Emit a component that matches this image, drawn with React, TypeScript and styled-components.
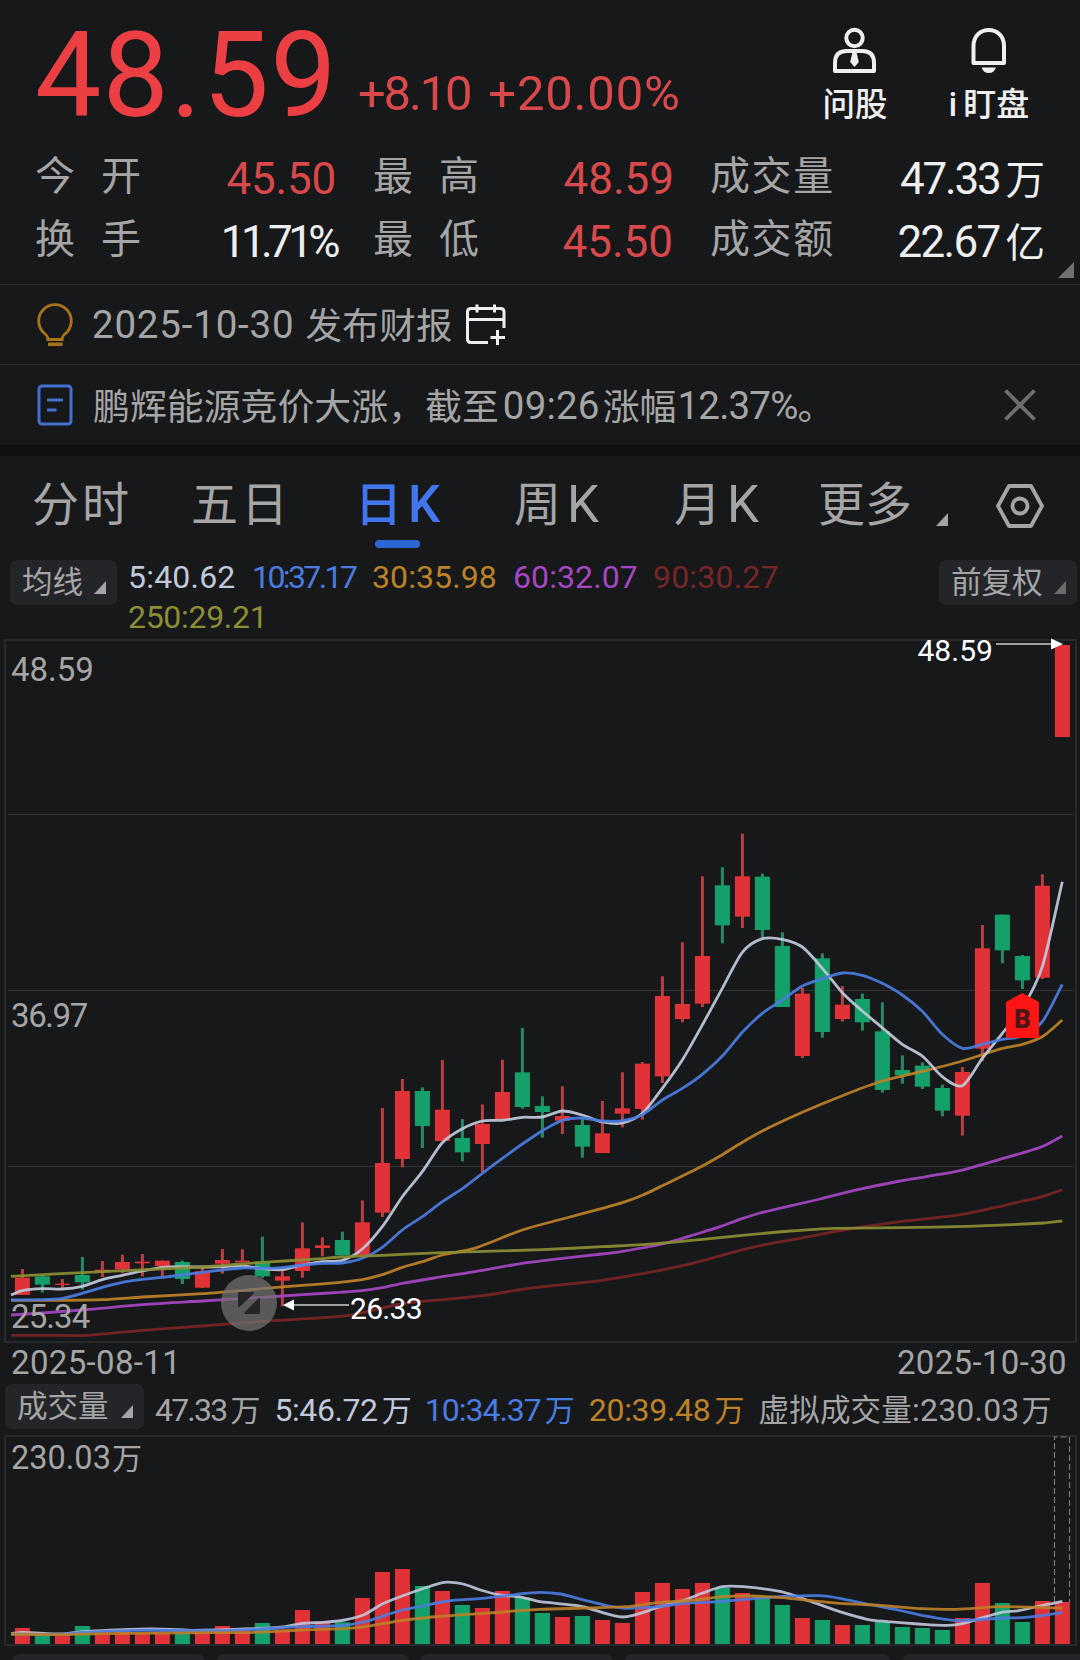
import React from "react";
import styled, { createGlobalStyle } from "styled-components";

const C = {
  bg: "#17181a",
  band: "#0f1012",
  line: "#28292c",
  chip: "#242529",
  grey: "#a5a5a5",
  white: "#efefef",
  red: "#d9494c",
  up: "#e13237",
  down: "#14a06b",
  upWick: "#b93f42",
  downWick: "#278a63",
  blue: "#4176ee",
  ma5: "#c0c8da",
  ma10: "#4a7ce0",
  ma30: "#bd8128",
  ma60: "#a646c4",
  ma90: "#782526",
  ma250: "#8b8e33",
};

const FONT = `Roboto, "Noto Sans CJK SC", sans-serif`;

const Global = createGlobalStyle`
  html, body { margin: 0; background: ${C.bg}; }
  body { width: 1080px; height: 1660px; overflow: hidden; font-family: ${FONT}; }
  * { box-sizing: border-box; }
  svg { display: block; flex: none; overflow: visible; }
`;

const Page = styled.main`
  width: 1080px;
  height: 1660px;
  overflow: hidden;
  display: flex;
  flex-direction: column;
  background: ${C.bg};
  color: ${C.grey};
  white-space: nowrap;
  & > * {
    flex: none;
  }
`;

const Text = styled.span<{ $size: number; $color?: string; $ls?: number; $weight?: number; $ml?: number }>`
  font-size: ${(p) => p.$size}px;
  color: ${(p) => p.$color ?? "inherit"};
  letter-spacing: ${(p) => p.$ls ?? 0}px;
  font-weight: ${(p) => p.$weight ?? 400};
  margin-left: ${(p) => p.$ml ?? 0}px;
`;
const Han = styled(Text)`
  padding-bottom: 3px;
`;

const Header = styled.header`
  height: 148px;
  display: flex;
  padding-left: 35px;
`;
const Price = styled.div`
  font-size: 118px;
  line-height: 152px;
  letter-spacing: 1.3px;
  color: #eb3f43;
  width: 323px;
`;
const Change = styled.div`
  display: flex;
  gap: 18px;
  font-size: 49px;
  line-height: 60px;
  padding-top: 64px;
  color: ${C.red};
  width: 434px;
`;
const Action = styled.button<{ $w: number }>`
  width: ${(p) => p.$w}px;
  border: 0;
  padding: 26px 0 0;
  background: none;
  color: ${C.white};
  font-family: inherit;
  display: flex;
  flex-direction: column;
  align-items: center;
  gap: 9px;
  line-height: 44px;
`;

const Stats = styled.section`
  height: 137px;
  display: grid;
  grid-template-columns: 302px 301px 335px;
  grid-auto-rows: 63px;
  column-gap: 36px;
  padding-left: 35px;
  border-bottom: 1px solid #2d2e30;
  position: relative;
`;
const Stat = styled.div<{ $inset?: number }>`
  display: flex;
  justify-content: space-between;
  line-height: 63px;
  padding-right: ${(p) => p.$inset ?? 0}px;
`;
const StatLabel = styled.span<{ $wide?: boolean }>`
  font-size: 40px;
  letter-spacing: ${(p) => (p.$wide ? 26 : 1.6)}px;
  line-height: 57px;
`;
const Corner = styled.i`
  position: absolute;
  right: 6px;
  bottom: 6px;
  width: 16px;
  height: 16px;
  background: #707072;
  clip-path: polygon(100% 0, 100% 100%, 0 100%);
`;

const Notice = styled.section<{ $last?: boolean }>`
  height: 80px;
  border-bottom: ${(p) => (p.$last ? 0 : 1)}px solid #2d2e30;
  padding: 0 44px 0 37px;
  display: flex;
  align-items: center;
`;
const Inline = styled.span`
  margin-left: 13px;
`;
const Push = styled.span`
  margin-left: auto;
`;
const Band = styled.div`
  height: 11px;
  background: ${C.band};
`;

const Tabs = styled.nav`
  height: 104px;
  display: grid;
  grid-template-columns: 160px 156px 170px 159px 163px 190px 82px;
  align-items: start;
`;
const Tab = styled.div<{ $active?: boolean; $pad: number; $ls?: number }>`
  height: 92px;
  padding-left: ${(p) => p.$pad}px;
  font-size: 47px;
  letter-spacing: ${(p) => p.$ls ?? 0}px;
  line-height: 98px;
  color: ${(p) => (p.$active ? C.blue : C.grey)};
  font-weight: ${(p) => (p.$active ? 500 : 400)};
  display: flex;
  gap: 6px;
  position: relative;
  &::after {
    content: "";
    display: ${(p) => (p.$active ? "block" : "none")};
    position: absolute;
    left: 59px;
    bottom: 0;
    width: 45px;
    height: 8px;
    border-radius: 4px;
    background: #2f66d5;
  }
`;
const Kay = styled.span`
  font-size: 51px;
`;

const Tri = styled.i<{ $color?: string }>`
  width: 12px;
  height: 13px;
  background: ${(p) => p.$color ?? C.grey};
  clip-path: polygon(100% 0, 100% 100%, 0 100%);
  flex: none;
`;
const Chip = styled.div<{ $w: number }>`
  width: ${(p) => p.$w}px;
  height: 45px;
  border-radius: 7px;
  background: ${C.chip};
  padding: 0 11px 0 12px;
  display: flex;
  justify-content: space-between;
  line-height: 45px;
  font-size: 30.5px;
  flex: none;
  ${Tri} {
    margin-top: 21px;
  }
`;

const Legend = styled.section`
  height: 79px;
  padding: 0 3px 0 10px;
  display: flex;
`;
const MaList = styled.div`
  width: 822px;
  padding-left: 11px;
  display: flex;
  flex-wrap: wrap;
  line-height: 40px;
  margin-top: -3px;
  align-content: flex-start;
`;
const MaItem = styled(Text)<{ $w: number }>`
  width: ${(p) => p.$w}px;
`;
const Dates = styled.div`
  display: flex;
  justify-content: space-between;
  height: 40px;
  padding: 0 13px 0 11px;
  line-height: 37px;
  font-size: 33px;
  letter-spacing: 0.35px;
`;
const VolLegend = styled.section`
  height: 52px;
  padding-left: 5px;
  display: flex;
  line-height: 52px;
`;
const Footer = styled.footer`
  padding: 8px 0 0 12px;
  display: grid;
  grid-template-columns: 193px 193px 193px 267px 193px;
  gap: 11px;
  height: 14px;
`;
const FootTab = styled.div`
  height: 40px;
  border-radius: 8px;
  background: ${C.chip};
`;

type Pt = [number, number];
type Candle = [boolean, number, number, number, number];

const X0 = 22.4;
const STEP = 20;
const U = true;
const D = false;

// [rising, body top, body bottom, wick top, wick bottom]
const at = (base: number, rows: Candle[]): Candle[] =>
  rows.map(([c, a, b, t, l]) => [c, base + a / 3, base + b / 3, base + t / 3, base + l / 3]);

const candles: Candle[] = [
  ...at(1050, [
    [U, 683, 735, 657, 735], [D, 679, 704, 675, 728], [U, 701, 705, 687, 713], [D, 675, 697, 621, 719],
    [U, 659, 664, 633, 681], [U, 636, 658, 614, 670], [U, 635, 640, 612, 679], [U, 632, 648, 632, 681],
    [D, 636, 687, 632, 702], [U, 664, 713, 654, 713], [U, 630, 641, 597, 671], [U, 632, 637, 598, 637],
    [D, 635, 679, 560, 684], [U, 679, 692, 660, 769], [U, 595, 663, 517, 683], [U, 586, 594, 562, 619],
    [D, 570, 616, 545, 616], [U, 517, 615, 451, 615],
  ]),
  ...at(970, [
    [U, 579, 728, 414, 741], [U, 363, 567, 327, 592], [D, 363, 468, 352, 534], [U, 419, 513, 270, 513],
    [D, 504, 547, 447, 574], [U, 462, 522, 403, 606], [U, 366, 449, 269, 449], [D, 307, 411, 174, 416],
    [D, 408, 426, 379, 503], [U, 438, 452, 349, 492], [D, 465, 530, 445, 563], [U, 490, 549, 393, 549],
    [U, 415, 431, 307, 472],
  ]),
  ...at(800, [
    [U, 791, 927, 786, 959], [U, 588, 829, 529, 849], [U, 612, 657, 427, 667], [U, 468, 611, 229, 621],
    [D, 256, 376, 202, 430], [U, 229, 350, 101, 384], [D, 230, 390, 221, 412], [D, 438, 621, 397, 621],
    [U, 581, 768, 563, 774], [D, 475, 696, 460, 713], [U, 614, 657, 558, 665], [D, 597, 667, 581, 692],
    [D, 694, 870, 607, 878], [D, 810, 826, 766, 851], [D, 797, 860, 787, 867], [D, 864, 932, 854, 949],
    [U, 816, 947, 801, 1007], [U, 445, 746, 375, 784], [D, 344, 451, 344, 490], [D, 468, 541, 465, 567],
    [U, 257, 533, 223, 537],
  ]),
  [U, 645, 737, 645, 737],
];

const seg = (x0: number, y0: number, sx: number, pts: Pt[]): Pt[] =>
  pts.map(([x, y]) => [x0 + x / sx, y0 + y / 3]);

const A = (pts: Pt[]) => seg(0, 1050, 3, pts);
const B = (pts: Pt[]) => seg(340, 970, 3, pts);
const E = (pts: Pt[]) => seg(620, 800, 3, pts);
const R = (pts: Pt[]) => seg(700, 1130, 3, pts);

const lines: { color: string; pts: Pt[] }[] = [
  {
    color: C.ma90,
    pts: [
      ...A([[33, 856], [150, 856], [260, 856], [427, 841], [607, 828], [787, 814], [1040, 797]]),
      ...B([[187, 1001], [307, 989], [427, 977], [547, 958], [667, 944], [787, 931], [907, 911], [1000, 893]]),
      ...R([[0, 394], [120, 361], [180, 347], [300, 325], [430, 300], [600, 275], [780, 254], [970, 213], [1030, 199], [1087, 179]]),
    ],
  },
  {
    color: C.ma60,
    pts: [
      ...A([[33, 795], [247, 780], [427, 764], [607, 753], [787, 742], [907, 734]]),
      ...B([[0, 967], [67, 962], [127, 953], [187, 940], [307, 920], [427, 901], [547, 880], [667, 865], [787, 852], [847, 844], [967, 822]]),
      ...R([[0, 309], [60, 290], [120, 268], [180, 249], [360, 207], [460, 182], [600, 153], [780, 122], [910, 85], [970, 68], [1030, 48], [1087, 18]]),
    ],
  },
  {
    color: C.ma30,
    pts: [
      ...A([[33, 751], [180, 751], [307, 749], [427, 741], [607, 731], [787, 716], [907, 706]]),
      ...B([[0, 937], [67, 929], [127, 914], [187, 892], [247, 875], [307, 855], [400, 836], [547, 780], [667, 747], [787, 715], [847, 698], [907, 676], [967, 647], [1027, 618]]),
      ...R([[0, 112], [60, 78], [120, 41]]),
      ...E([[427, 993], [547, 937], [667, 887], [787, 843], [907, 814], [1027, 783], [1147, 745], [1207, 733], [1267, 710], [1327, 660]]),
    ],
  },
  {
    color: C.ma5,
    pts: [
      ...A([[33, 735], [67, 722], [127, 716], [187, 717], [247, 709], [307, 689], [367, 676], [427, 663], [487, 652], [547, 650], [607, 651], [667, 650], [727, 648], [787, 656], [847, 659], [907, 645], [967, 635], [1027, 631]]),
      ...B([[67, 837], [127, 770], [187, 680], [247, 605], [307, 518], [367, 476], [427, 453], [487, 451], [547, 442], [607, 441], [667, 423], [727, 435], [787, 456], [847, 459], [907, 430]]),
      ...E([[127, 865], [187, 780], [247, 675], [307, 565], [367, 457], [427, 416], [487, 418], [547, 441], [607, 505], [667, 578], [727, 633], [787, 683], [847, 733], [907, 768], [967, 830], [1027, 857], [1087, 775], [1147, 700], [1207, 625], [1267, 500], [1327, 245]]),
    ],
  },
  {
    color: C.ma10,
    pts: [
      ...A([[33, 750], [127, 749], [187, 745], [247, 730], [307, 712], [367, 697], [427, 688], [487, 682], [547, 675], [607, 667], [667, 660], [727, 654], [787, 655], [847, 653], [907, 645], [967, 640], [1027, 639]]),
      ...B([[67, 865], [127, 832], [187, 780], [247, 740], [307, 695], [367, 656], [427, 610], [487, 565], [547, 522], [607, 482], [667, 451], [727, 444], [787, 453], [847, 452], [907, 434], [967, 390]]),
      ...E([[187, 865], [247, 823], [307, 768], [367, 697], [427, 640], [487, 600], [547, 558], [607, 536], [667, 519], [727, 526], [787, 550], [847, 585], [907, 634], [967, 703], [1027, 745], [1087, 733], [1147, 718], [1207, 708], [1267, 665], [1327, 553]]),
    ],
  },
  {
    color: C.ma250,
    pts: [
      ...A([[33, 679], [307, 665], [607, 651], [787, 637], [967, 626]]),
      ...B([[0, 861], [127, 856], [307, 848], [607, 839], [787, 830], [907, 824]]),
      ...R([[0, 329], [120, 317], [270, 303], [400, 295], [600, 293], [800, 289], [1030, 279], [1087, 273]]),
    ],
  },
];

const F = 1568 / 540;
const G = (pts: Pt[]) => seg(0, 1540, F, pts);
const H = (pts: Pt[]) => seg(540, 1540, F, pts);

const volLines: { color: string; pts: Pt[] }[] = [
  {
    color: C.ma5,
    pts: [
      ...G([[32, 281], [65, 277], [180, 282], [240, 275], [297, 272], [430, 267], [500, 268], [560, 271], [740, 266], [820, 261], [878, 250], [940, 247], [1000, 240], [1055, 225], [1110, 192], [1168, 168], [1225, 147], [1290, 127], [1345, 132], [1395, 150], [1450, 165], [1515, 172]]),
      ...H([[0, 185], [120, 199], [240, 231], [350, 200], [420, 180], [470, 160], [530, 140], [590, 140], [700, 155], [780, 182], [870, 215], [950, 238], [1010, 245], [1100, 252], [1170, 256], [1210, 254], [1260, 241], [1340, 217], [1390, 212], [1450, 198], [1517, 184]]),
    ],
  },
  {
    color: C.ma10,
    pts: [
      ...G([[32, 282], [180, 283], [240, 277], [400, 271], [620, 272], [740, 268], [870, 260], [1000, 256], [1060, 245], [1168, 210], [1225, 198], [1300, 183], [1400, 175], [1500, 163]]),
      ...H([[0, 157], [60, 162], [120, 178], [200, 198], [250, 205], [340, 200], [420, 190], [530, 184], [640, 174], [740, 168], [810, 167], [870, 175], [950, 192], [1040, 210], [1130, 230], [1200, 241], [1260, 240], [1340, 234], [1400, 233], [1460, 226], [1517, 218]]),
    ],
  },
  {
    color: C.ma30,
    pts: [
      ...G([[32, 282], [180, 284], [300, 281], [620, 278], [740, 277], [878, 270], [1000, 266], [1060, 260], [1168, 241], [1290, 228], [1460, 216]]),
      ...H([[0, 208], [250, 200], [340, 188], [450, 180], [530, 170], [620, 168], [700, 173], [870, 190], [990, 196], [1110, 206], [1210, 208], [1340, 200], [1517, 204]]),
    ],
  },
];

const volTops = [
  264, 281, 281, 258, 279, 268, 279, 279, 277, 277, 258, 270, 249, 268, 210, 245, 247, 174, 96, 87, 138, 153, 195, 204,
  153, 172, 219, 231, 228, 240, 249, 156, 129, 147, 129, 144, 159, 171, 195, 234, 240, 255, 255, 246, 261, 264, 270,
  234, 129, 189, 246, 183, 186,
];

function smooth(p: Pt[]): string {
  const n = p.length;
  const slope = (i: number) => {
    const a = p[Math.max(0, i - 1)];
    const b = p[Math.min(n - 1, i + 1)];
    return (b[1] - a[1]) / (b[0] - a[0]);
  };
  let d = `M${p[0][0].toFixed(1)} ${p[0][1].toFixed(1)}`;
  for (let i = 0; i < n - 1; i++) {
    const [x1, y1] = p[i];
    const [x2, y2] = p[i + 1];
    const h = (x2 - x1) / 3.6;
    d += `C${(x1 + h).toFixed(1)} ${(y1 + h * slope(i)).toFixed(1)} ${(x2 - h).toFixed(1)} ${(y2 - h * slope(i + 1)).toFixed(1)} ${x2.toFixed(1)} ${y2.toFixed(1)}`;
  }
  return d;
}

const ChartText = styled.text`
  font-family: ${FONT};
`;

function PriceChart() {
  return (
    <svg width="1080" height="705" viewBox="0 639 1080 705">
      <rect x="5" y="640" width="1071" height="702" fill="none" stroke={C.line} strokeWidth="2" />
      {[814.5, 990.5, 1166.5].map((y) => (
        <path key={y} d={`M8 ${y}H1073`} stroke="#313234" strokeWidth="1" />
      ))}
      {candles.map(([up, a, b, t, l], i) => {
        const x = X0 + i * STEP;
        return (
          <g key={i}>
            <rect x={x - 1.5} y={t} width="3" height={l - t} fill={up ? C.upWick : C.downWick} />
            <rect x={x - 7.5} y={a} width="15" height={b - a} fill={up ? C.up : C.down} />
          </g>
        );
      })}
      {lines.map((l) => (
        <path key={l.color} d={smooth(l.pts)} fill="none" stroke={l.color} strokeWidth="2.8" strokeOpacity="0.93" />
      ))}
      <g fill={C.grey} fontSize="33">
        <ChartText x="11" y="681">48.59</ChartText>
        <ChartText x="11" y="1026.5" letterSpacing="-1.4">36.97</ChartText>
        <ChartText x="11" y="1328" letterSpacing="-.9">25.34</ChartText>
      </g>
      <g fill="#fff" fontSize="30">
        <ChartText x="917.5" y="661">48.59</ChartText>
        <ChartText x="350" y="1318.5" letterSpacing="-.7">26.33</ChartText>
      </g>
      <path d="M996 644H1052M293 1305H349" stroke="#a0a0a0" strokeWidth="1.8" />
      <path d="M1051 638.5L1063 644L1051 649.5ZM294 1299.5L283 1305L294 1310.5Z" fill="#fff" />
      <circle cx="249" cy="1303" r="28" fill="#737373" fillOpacity="0.72" />
      <g fill="#242526" stroke="#242526" strokeWidth="2" strokeLinejoin="round">
        <path d="M239 1293H253L239 1306Z" />
        <path d="M259 1299V1313H245.5Z" />
      </g>
      <path d="M1022.3 993L1039 1002V1036.5Q1039 1038 1037.5 1038H1007.5Q1006 1038 1006 1036.5V1002Z" fill="#fb1515" />
      <ChartText x="1022.5" y="1027.5" textAnchor="middle" fontSize="26" fontWeight="900" fill="#4c1518">B</ChartText>
    </svg>
  );
}

function VolumeChart() {
  return (
    <svg width="1080" height="210" viewBox="0 1436 1080 210">
      <rect x="5" y="1436" width="1071" height="209" fill="none" stroke={C.line} strokeWidth="2" />
      <ChartText x="11" y="1469" fontSize="32.5" fill={C.grey}>230.03<tspan dx="1" fontSize="30">万</tspan></ChartText>
      {volTops.map((v, i) => (
        <rect key={i} x={X0 + i * STEP - 7.5} y={1540 + v / 3} width="15" height={104 - v / 3} fill={candles[i][0] ? C.up : C.down} />
      ))}
      <path d="M1054.5 1602V1437H1069.5V1602" fill="none" stroke="#77787a" strokeWidth="1.2" strokeDasharray="6 3" />
      {volLines.map((l) => (
        <path key={l.color} d={smooth(l.pts)} fill="none" stroke={l.color} strokeWidth="2.8" strokeOpacity="0.9" />
      ))}
    </svg>
  );
}

const PersonIcon = () => (
  <svg width="46" height="48" viewBox="0 0 46 48" fill="none" stroke={C.white} strokeWidth="4">
    <circle cx="22.5" cy="12" r="8.2" />
    <path d="M3 45V37Q3 25 14.5 25H30.5Q42 25 42 37V45Z" strokeLinejoin="round" />
    <path d="M20.5 26H24.5L26.8 36L22.5 41L18.2 36Z" fill={C.white} stroke="none" />
  </svg>
);
const BellIcon = () => (
  <svg width="46" height="48" viewBox="0 0 46 48" fill="none" stroke={C.white} strokeWidth="4">
    <path d="M7.5 37V20C7.5 -1.3 38 -1.3 38 20V37Z" strokeLinejoin="round" />
    <path d="M15.500 41.500H30Q28 47 22.800 47Q17.500 47 15.500 41.500Z" fill={C.white} stroke="none" />
  </svg>
);
const BulbIcon = () => (
  <svg width="36" height="44" viewBox="0 0 36 44" fill="none" stroke="#a8721a" strokeWidth="2.8">
    <path d="M10.800 36.500V35Q10.500 33 8.200 31A16.300 16.300 0 1 1 27.800 31Q25.500 33 25.200 35V36.500Z" />
    <path d="M11 41.300H25.500" strokeWidth="3.600" />
  </svg>
);
const CalendarIcon = () => (
  <svg width="40" height="42" viewBox="0 0 40 42" fill="none" stroke={C.white} strokeWidth="3">
    <path d="M22 38.500H5Q1.500 38.500 1.500 35V8Q1.500 4.500 5 4.500H34.500Q38 4.500 38 8V24" />
    <path d="M2 15.500H38M11 .5V8.500M28.500 .5V8.500M31.500 26V41M24.500 33.500H39" />
  </svg>
);
const NewsIcon = () => (
  <svg width="36" height="42" viewBox="0 0 36 42" fill="none" stroke="#4270d0" strokeWidth="3">
    <rect x="2" y="2" width="32" height="38" rx="3" />
    <path d="M10 16H26M10 26H19.500" />
  </svg>
);
const CloseIcon = () => (
  <svg width="32" height="32" viewBox="0 0 32 32" stroke="#6e6e70" strokeWidth="3.800">
    <path d="M1.500 1.500L30.500 30.500M30.500 1.500L1.500 30.500" />
  </svg>
);
const HexIcon = () => (
  <svg width="48" height="44" viewBox="0 0 48 44" fill="none" stroke={C.grey} strokeWidth="3.800">
    <path d="M13 2H35L46 22L35 42H13L2 22Z" strokeLinejoin="round" />
    <circle cx="24" cy="22" r="7.500" />
  </svg>
);

const HexTab = styled(Tab)`
  padding-top: 28px;
  margin-left: -2px;
`;
const MoreTab = styled(Tab)`
  gap: 24px;
  ${Tri} {
    margin-top: 57px;
  }
`;

export default function App() {
  return (
    <Page>
      <Global />
      <Header>
        <Price>48.59</Price>
        <Change>
          <Text $size={49} $ls={-2.2}>+8.10</Text>
          <Text $size={49} $ls={0.8}>+20.00%</Text>
        </Change>
        <Action $w={126}>
          <PersonIcon />
          <Text $size={32.5} $weight={500}>问股</Text>
        </Action>
        <Action $w={142}>
          <BellIcon />
          <Text $size={32.5} $weight={500}>
            i<Text $size={33} $ml={6} $weight={500}>盯盘</Text>
          </Text>
        </Action>
      </Header>

      <Stats>
        <Stat $inset={1}><StatLabel $wide>今开</StatLabel><Text $size={44} $color={C.red} $ls={-0.2}>45.50</Text></Stat>
        <Stat><StatLabel $wide>最高</StatLabel><Text $size={44} $color={C.red}>48.59</Text></Stat>
        <Stat>
          <StatLabel>成交量</StatLabel>
          <span><Text $size={44} $color={C.white} $ls={-2.2}>47.33</Text><Text $size={39.5} $color={C.white} $ml={6}>万</Text></span>
        </Stat>
        <Stat $inset={1}><StatLabel $wide>换手</StatLabel><Text $size={44} $color={C.white} $ls={-4.6}>11.71%</Text></Stat>
        <Stat $inset={1}><StatLabel $wide>最低</StatLabel><Text $size={44} $color={C.red}>45.50</Text></Stat>
        <Stat>
          <StatLabel>成交额</StatLabel>
          <span><Text $size={44} $color={C.white} $ls={-1.7}>22.67</Text><Text $size={39.5} $color={C.white} $ml={6}>亿</Text></span>
        </Stat>
        <Corner />
      </Stats>

      <Notice>
        <BulbIcon />
        <Text $size={38.5} $ml={19} $ls={0.8}>2025-10-30</Text>
        <Han $size={36.5} $ml={11} $ls={0.4}>发布财报</Han>
        <Inline><CalendarIcon /></Inline>
      </Notice>
      <Notice $last>
        <NewsIcon />
        <Han $size={36.9} $ml={20}>鹏辉能源竞价大涨，截至</Han>
        <Text $size={38.5} $ml={4} $ls={0.2}>09:26</Text>
        <Han $size={36.9} $ml={3}>涨幅</Han>
        <Text $size={38.5} $ml={1} $ls={-0.8}>12.37%</Text>
        <Han $size={36.9} $ml={0}>。</Han>
        <Push><CloseIcon /></Push>
      </Notice>
      <Band />

      <Tabs>
        <Tab $pad={32} $ls={3}>分时</Tab>
        <Tab $pad={31} $ls={3}>五日</Tab>
        <Tab $pad={39} $active>日<Kay>K</Kay></Tab>
        <Tab $pad={28}>周<Kay>K</Kay></Tab>
        <Tab $pad={29}>月<Kay>K</Kay></Tab>
        <MoreTab $pad={10}>更多<Tri /></MoreTab>
        <HexTab $pad={0}><HexIcon /></HexTab>
      </Tabs>

      <Legend>
        <Chip $w={107}>均线<Tri /></Chip>
        <MaList>
          <MaItem $w={124} $size={32} $color={C.ma5} $ls={0.2}>5:40.62</MaItem>
          <MaItem $w={120} $size={32} $color={C.ma10} $ls={-2.6}>10:37.17</MaItem>
          <MaItem $w={141} $size={32} $color={C.ma30} $ls={0.1}>30:35.98</MaItem>
          <MaItem $w={140} $size={32} $color={C.ma60} $ls={0.1}>60:32.07</MaItem>
          <MaItem $w={200} $size={32} $color={C.ma90} $ls={0.2}>90:30.27</MaItem>
          <MaItem $w={200} $size={32} $color={C.ma250} $ls={-0.3}>250:29.21</MaItem>
        </MaList>
        <Chip $w={138}>前复权<Tri $color="#6c6c6e" /></Chip>
      </Legend>

      <PriceChart />
      <Dates>
        <span>2025-08-11</span>
        <span>2025-10-30</span>
      </Dates>
      <VolLegend>
        <Chip $w={139}>成交量<Tri /></Chip>
        <Text $size={32} $ml={11} $ls={-1.8}>47.33<Text $size={30} $ml={4}>万</Text></Text>
        <Text $size={32} $ml={14} $ls={-0.4} $color={C.ma5}>5:46.72<Text $size={30} $ml={4}>万</Text></Text>
        <Text $size={32} $ml={13} $ls={-1} $color={C.ma10}>10:34.37<Text $size={30} $ml={4}>万</Text></Text>
        <Text $size={32} $ml={14} $ls={-0.3} $color={C.ma30}>20:39.48<Text $size={30} $ml={4}>万</Text></Text>
        <Text $size={30.5} $ml={14} $ls={0.2}>虚拟成交量<Text $size={32} $ls={0.2}>:230.03</Text><Text $size={30} $ml={2}>万</Text></Text>
      </VolLegend>
      <VolumeChart />
      <Footer>
        {[0, 1, 2, 3, 4].map((i) => <FootTab key={i} />)}
      </Footer>
    </Page>
  );
}
